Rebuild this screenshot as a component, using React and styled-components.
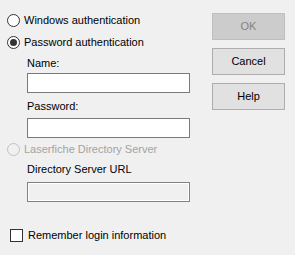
import React from "react";
import styled, { createGlobalStyle } from "styled-components";

const Global = createGlobalStyle`
  html, body {
    margin: 0;
    padding: 0;
    background: #f0f0f0;
  }
  body {
    font-family: "Liberation Sans", Arial, sans-serif;
    font-size: 11px;
    line-height: 13px;
    color: #000;
  }
`;

const Dialog = styled.div`
  width: 295px;
  height: 255px;
  display: flex;
  flex-direction: row;
  box-sizing: border-box;
`;

const LeftPane = styled.div`
  width: 212px;
  display: flex;
  flex-direction: column;
  padding: 9px 0 0 7px;
  box-sizing: border-box;
`;

const RadioRow = styled.label`
  height: 22px;
  display: flex;
  align-items: center;
  color: ${(p) => (p.disabled ? "#a3a3a3" : "#000")};
`;

const Circle = styled.span`
  width: 13px;
  height: 13px;
  box-sizing: border-box;
  border-radius: 50%;
  border: 1px solid ${(p) => (p.disabled ? "#c2c2c2" : "#333")};
  background: ${(p) => (p.disabled ? "#f0f0f0" : "#fff")};
  display: flex;
  align-items: center;
  justify-content: center;
  margin-right: 4px;
  &::after {
    content: "";
    display: ${(p) => (p.checked ? "block" : "none")};
    width: 7px;
    height: 7px;
    border-radius: 50%;
    background: #333;
  }
`;

const Indent = styled.div`
  padding-left: 20px;
  display: flex;
  flex-direction: column;
`;

const FieldLabel = styled.div`
  line-height: 13px;
  margin-top: ${(p) => p.top || 0}px;
`;

const Input = styled.div`
  width: 163px;
  height: 20px;
  box-sizing: border-box;
  border: 1px solid ${(p) => (p.disabled ? "#828282" : "#7a7a7a")};
  background: ${(p) => (p.disabled ? "#f0f0f0" : "#fff")};
  box-shadow: ${(p) => (p.disabled ? "inset 0 0 0 1px #fff" : "none")};
  margin-top: ${(p) => p.top || 0}px;
`;

const CheckRow = styled.label`
  display: flex;
  align-items: center;
  margin-top: 27px;
  padding-left: 3px;
`;

const Box = styled.span`
  width: 13px;
  height: 13px;
  box-sizing: border-box;
  border: 1px solid #333;
  background: #fff;
  margin-right: 5px;
`;

const RightPane = styled.div`
  display: flex;
  flex-direction: column;
  gap: 8px;
  padding-top: 13px;
`;

const Button = styled.div`
  width: 73px;
  height: 27px;
  box-sizing: border-box;
  border: 1px solid ${(p) => (p.disabled ? "#bfbfbf" : "#adadad")};
  background: ${(p) => (p.disabled ? "#cccccc" : "#e1e1e1")};
  color: ${(p) => (p.disabled ? "#838383" : "#000")};
  display: flex;
  align-items: center;
  justify-content: center;
`;

export default function App() {
  return (
    <>
      <Global />
      <Dialog>
        <LeftPane>
          <RadioRow>
            <Circle />
            Windows authentication
          </RadioRow>
          <RadioRow>
            <Circle checked />
            Password authentication
          </RadioRow>
          <Indent>
            <FieldLabel top={4}>Name:</FieldLabel>
            <Input top={3} />
            <FieldLabel top={7}>Password:</FieldLabel>
            <Input top={5} />
          </Indent>
          <RadioRow disabled>
            <Circle disabled />
            Laserfiche Directory Server
          </RadioRow>
          <Indent>
            <FieldLabel top={3}>Directory Server URL</FieldLabel>
            <Input disabled top={6} />
          </Indent>
          <CheckRow>
            <Box />
            Remember login information
          </CheckRow>
        </LeftPane>
        <RightPane>
          <Button disabled>OK</Button>
          <Button>Cancel</Button>
          <Button>Help</Button>
        </RightPane>
      </Dialog>
    </>
  );
}
